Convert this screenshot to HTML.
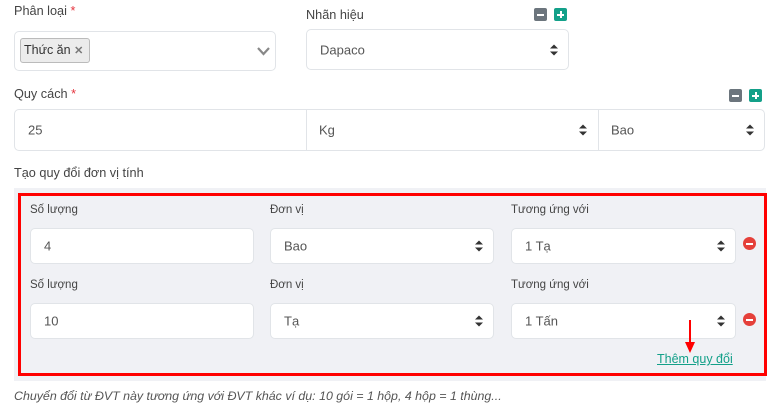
<!DOCTYPE html><html><head><style>
body{margin:0;width:784px;height:410px;background:#fff;font-family:"Liberation Sans",sans-serif;font-size:13px;color:#333;position:relative;overflow:hidden}
.a{position:absolute}
.lbl{font-size:12.7px;color:#444}
.req{color:#e5323c}
.box{position:absolute;background:#fff;border:1px solid #e1e4e8;border-radius:5px;box-sizing:border-box;color:#555;font-size:13px}
.box span{position:absolute;left:13px;top:50%;transform:translateY(-50%)}
.sa{position:absolute;right:10px;top:50%;transform:translateY(-50%);width:8px;height:11px}
.ib{position:absolute;width:13px;height:13px;border-radius:2px}
.sl{font-size:11.5px;color:#444}
.rm{position:absolute;width:13px;height:13px;border-radius:50%;background:#e5403a}
.rm:after{content:"";position:absolute;left:3px;top:5.5px;width:7px;height:2px;background:#fff}
</style></head><body>
<svg width="0" height="0" style="position:absolute"><defs><g id="ud"><path d="M4 0L8 4H0z M4 11L0 7H8z" fill="#333"/></g></defs></svg>
<div class="a lbl" style="left:14px;top:4px">Phân loại <span class="req">*</span></div>
<div class="box" style="left:14px;top:31px;width:262px;height:40px">
 <div class="a" style="left:5px;top:6px;height:25px;width:70px;background:#ececec;border:1px solid #bbb;border-radius:3px;box-sizing:border-box;font-size:12.5px;color:#333;line-height:23px;padding-left:3px">Thức ăn <span style="color:#777;font-weight:bold;font-size:11px;position:static;transform:none">✕</span></div>
 <svg class="a" style="left:242px;top:15px" width="13" height="9"><path d="M1 1L6.5 7L12 1" stroke="#888" stroke-width="2.2" fill="none"/></svg>
</div>
<div class="a lbl" style="left:306px;top:8px">Nhãn hiệu</div>
<div class="ib" style="left:534px;top:8px;background:#6c757d"><div class="a" style="left:3px;top:5.5px;width:7px;height:2px;background:#fff"></div></div>
<div class="ib" style="left:554px;top:8px;background:#13a089"><div class="a" style="left:3px;top:5.5px;width:7px;height:2px;background:#fff"></div><div class="a" style="left:5.5px;top:3px;width:2px;height:7px;background:#fff"></div></div>
<div class="box" style="left:306px;top:29px;width:263px;height:41px"><span>Dapaco</span><svg class="sa"><use href="#ud"/></svg></div>
<div class="a lbl" style="left:14px;top:87px">Quy cách <span class="req">*</span></div>
<div class="ib" style="left:729px;top:89px;background:#6c757d"><div class="a" style="left:3px;top:5.5px;width:7px;height:2px;background:#fff"></div></div>
<div class="ib" style="left:749px;top:89px;background:#13a089"><div class="a" style="left:3px;top:5.5px;width:7px;height:2px;background:#fff"></div><div class="a" style="left:5.5px;top:3px;width:2px;height:7px;background:#fff"></div></div>
<div class="box" style="left:14px;top:109px;width:751px;height:42px">
 <span>25</span>
 <div class="a" style="left:291px;top:0;bottom:0;border-left:1px solid #e1e4e8"></div>
 <div class="a" style="left:583px;top:0;bottom:0;border-left:1px solid #e1e4e8"></div>
 <span style="left:304px">Kg</span><svg class="sa" style="right:177px"><use href="#ud"/></svg>
 <span style="left:596px">Bao</span><svg class="sa"><use href="#ud"/></svg>
</div>
<div class="a lbl" style="left:14px;top:166px">Tạo quy đổi đơn vị tính</div>
<div class="a" style="left:14px;top:188px;width:752px;height:193px;background:#f0f1f5"></div>
<div class="a" style="left:18px;top:193px;width:749px;height:183px;border:3px solid #f00;box-sizing:border-box"></div>
<div class="a sl" style="left:30px;top:204px">Số lượng</div>
<div class="a sl" style="left:270px;top:204px">Đơn vị</div>
<div class="a sl" style="left:511px;top:204px">Tương ứng với</div>
<div class="box" style="left:30px;top:228px;width:224px;height:36px"><span>4</span></div>
<div class="box" style="left:270px;top:228px;width:224px;height:36px"><span>Bao</span><svg class="sa"><use href="#ud"/></svg></div>
<div class="box" style="left:511px;top:228px;width:225px;height:36px"><span>1 Tạ</span><svg class="sa"><use href="#ud"/></svg></div>
<div class="rm" style="left:743px;top:237px"></div>
<div class="a sl" style="left:30px;top:279px">Số lượng</div>
<div class="a sl" style="left:270px;top:279px">Đơn vị</div>
<div class="a sl" style="left:511px;top:279px">Tương ứng với</div>
<div class="box" style="left:30px;top:303px;width:224px;height:36px"><span>10</span></div>
<div class="box" style="left:270px;top:303px;width:224px;height:36px"><span>Tạ</span><svg class="sa"><use href="#ud"/></svg></div>
<div class="box" style="left:511px;top:303px;width:225px;height:36px"><span>1 Tấn</span><svg class="sa"><use href="#ud"/></svg></div>
<div class="rm" style="left:743px;top:313px"></div>
<svg class="a" style="left:684px;top:320px" width="12" height="34"><path d="M6 0V24" stroke="#f00" stroke-width="2"/><path d="M1 22L6 33L11 22z" fill="#f00"/></svg>
<div class="a" style="left:657px;top:352px;font-size:12.5px;color:#13a089;text-decoration:underline">Thêm quy đổi</div>
<div class="a" style="left:14px;top:389px;font-size:12.4px;font-style:italic;color:#555">Chuyển đổi từ ĐVT này tương ứng với ĐVT khác ví dụ: 10 gói = 1 hộp, 4 hộp = 1 thùng...</div>
</body></html>
